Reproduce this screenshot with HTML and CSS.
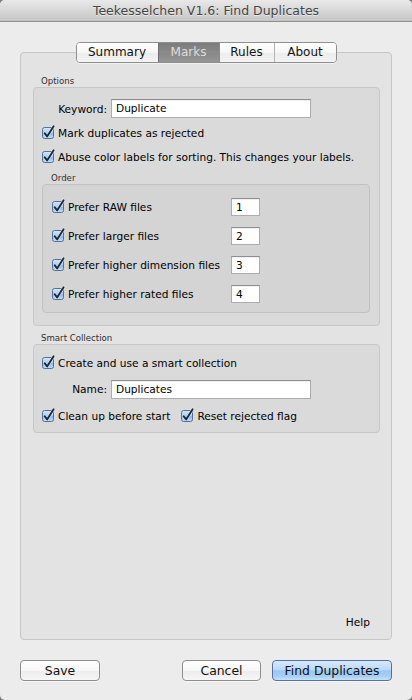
FILE: index.html
```html
<!DOCTYPE html>
<html>
<head>
<meta charset="utf-8">
<title>Teekesselchen V1.6: Find Duplicates</title>
<link rel="stylesheet" href="styles.css">
</head>
<body>
<div class="window">
  <div class="titlebar">Teekesselchen V1.6: Find Duplicates</div>
  <div class="content">
    <div class="tabs">
      <div class="tab tab-summary">Summary</div>
      <div class="tab tab-marks active">Marks</div>
      <div class="tab tab-rules">Rules</div>
      <div class="tab tab-about">About</div>
    </div>
    <div class="tabview">
      <div class="group-label">Options</div>
      <div class="group options">
        <div class="field-row">
          <span class="field-label">Keyword:</span>
          <div class="input wide">Duplicate</div>
        </div>
        <div class="check-list">
          <div class="check-row">
            <svg class="check" width="12" height="12" viewBox="0 0 12 12"><use href="#cb"/></svg>
            <span>Mark duplicates as rejected</span>
          </div>
          <div class="check-row">
            <svg class="check" width="12" height="12" viewBox="0 0 12 12"><use href="#cb"/></svg>
            <span>Abuse color labels for sorting. This changes your labels.</span>
          </div>
        </div>
        <div class="group-label sub">Order</div>
        <div class="group order">
          <div class="order-row">
            <svg class="check" width="12" height="12" viewBox="0 0 12 12"><use href="#cb"/></svg>
            <span class="order-text">Prefer RAW files</span>
            <div class="input small">1</div>
          </div>
          <div class="order-row">
            <svg class="check" width="12" height="12" viewBox="0 0 12 12"><use href="#cb"/></svg>
            <span class="order-text">Prefer larger files</span>
            <div class="input small">2</div>
          </div>
          <div class="order-row">
            <svg class="check" width="12" height="12" viewBox="0 0 12 12"><use href="#cb"/></svg>
            <span class="order-text">Prefer higher dimension files</span>
            <div class="input small">3</div>
          </div>
          <div class="order-row">
            <svg class="check" width="12" height="12" viewBox="0 0 12 12"><use href="#cb"/></svg>
            <span class="order-text">Prefer higher rated files</span>
            <div class="input small">4</div>
          </div>
        </div>
      </div>
      <div class="group-label smart-label">Smart Collection</div>
      <div class="group smart">
        <div class="check-row">
          <svg class="check" width="12" height="12" viewBox="0 0 12 12"><use href="#cb"/></svg>
          <span>Create and use a smart collection</span>
        </div>
        <div class="field-row name-row">
          <span class="field-label">Name:</span>
          <div class="input wide">Duplicates</div>
        </div>
        <div class="check-row clean-row">
          <svg class="check" width="12" height="12" viewBox="0 0 12 12"><use href="#cb"/></svg>
          <span>Clean up before start</span>
          <svg class="check second" width="12" height="12" viewBox="0 0 12 12"><use href="#cb"/></svg>
          <span>Reset rejected flag</span>
        </div>
      </div>
      <div class="help">Help</div>
    </div>
    <div class="buttons">
      <div class="btn btn-save">Save</div>
      <div class="btn btn-cancel">Cancel</div>
      <div class="btn btn-find">Find Duplicates</div>
    </div>
  </div>
</div>
<svg width="0" height="0" class="defs">
  <defs>
    <linearGradient id="cbg" x1="0" y1="0" x2="0" y2="1">
      <stop offset="0" stop-color="#d6e7fa"/>
      <stop offset="0.5" stop-color="#a9cbf0"/>
      <stop offset="0.55" stop-color="#8db9ea"/>
      <stop offset="1" stop-color="#c4def8"/>
    </linearGradient>
    <g id="cb">
      <rect x="0.5" y="0.5" width="11" height="11" rx="2" fill="url(#cbg)" stroke="#51709a"/>
      <path d="M2.6 6.2 L5.1 9.4 L11.6 -0.8" fill="none" stroke="#f2f6fb" stroke-width="3.2" stroke-linecap="round" stroke-linejoin="round" opacity="0.55"/>
      <path d="M2.6 6.2 L5.1 9.4 L11.6 -0.8" fill="none" stroke="#1d2a3d" stroke-width="1.9" stroke-linecap="round" stroke-linejoin="round"/>
    </g>
  </defs>
</svg>
</body>
</html>
```

FILE: styles.css
```css
html, body {
  margin: 0;
  padding: 0;
}

body {
  background: #7c7c7c;
  font-family: "DejaVu Sans", "Verdana", sans-serif;
  font-size: 10.6px;
  color: #000;
}

.defs {
  position: absolute;
  width: 0;
  height: 0;
}

.window {
  width: 412px;
  height: 700px;
  background: #ececec;
  border-radius: 5px;
  overflow: hidden;
  display: flex;
  flex-direction: column;
}

.titlebar {
  height: 21px;
  border-bottom: 1px solid #8e8e8e;
  background: linear-gradient(#e9e9e9, #d3d3d3 60%, #c6c6c6);
  text-align: center;
  font-size: 12.5px;
  line-height: 22px;
  color: #454545;
  text-shadow: 0 1px 0 rgba(255, 255, 255, 0.55);
}

.content {
  flex: 1;
  padding: 20px 20px 0;
  display: flex;
  flex-direction: column;
}

/* segmented tab control */
.tabs {
  align-self: center;
  display: flex;
  height: 19px;
  border: 1px solid #8f8f8f;
  border-radius: 4px;
  overflow: hidden;
  margin-bottom: -11px;
  position: relative;
  z-index: 1;
  box-shadow: 0 1px 0 rgba(255, 255, 255, 0.5);
}

.tab {
  box-sizing: border-box;
  height: 19px;
  line-height: 19px;
  text-align: center;
  font-size: 12px;
  color: #111;
  background: linear-gradient(#ffffff, #f6f6f6 50%, #ececec 51%, #f3f3f3);
  border-left: 1px solid #b3b3b3;
}

.tab-summary { width: 81px; border-left: 0; }
.tab-marks { width: 61px; }
.tab-rules { width: 55px; }
.tab-about { width: 62px; }

.tab.active {
  background: linear-gradient(#7b7b7b, #8a8a8a 50%, #888888 51%, #969696);
  color: #dedede;
  border-left-color: #6f6f6f;
}

.tab.active + .tab {
  border-left-color: #8a8a8a;
}

/* tab view box */
.tabview {
  box-sizing: border-box;
  height: 588px;
  border: 1px solid #c6c6c6;
  border-radius: 4px;
  background: #e3e3e3;
  padding: 22px 11px 0 12px;
  display: flex;
  flex-direction: column;
}

.group-label {
  font-size: 8.6px;
  line-height: 12px;
  color: #2f2f2f;
  padding-left: 8px;
}

.group-label.sub {
  padding-left: 1px;
  margin-left: 8px;
  margin-top: 3px;
}

.smart-label {
  margin-top: 6px;
}

.group {
  border: 1px solid #c7c7c7;
  border-radius: 4px;
  background: #dadada;
}

.options {
  padding: 11px 9px 12px 8px;
}

.order {
  background: #d4d4d4;
  border-color: #c1c1c1;
  padding: 7px 0 4px 9px;
}

.smart {
  padding: 6px 9px 3px 8px;
}

.field-row {
  display: flex;
  align-items: center;
  height: 19px;
}

.field-label {
  width: 65px;
  text-align: right;
  margin-right: 4px;
}

.input {
  box-sizing: border-box;
  background: #fff;
  border: 1px solid #acacac;
  border-top-color: #8e8e8e;
  box-shadow: inset 0 1px 0 rgba(0, 0, 0, 0.06);
  padding-left: 4px;
  color: #000;
}

.input.wide {
  width: 200px;
  height: 19px;
  line-height: 17px;
}

.input.small {
  width: 29px;
  height: 18px;
  line-height: 16px;
}

.check-list {
  padding-top: 3px;
}

.check-row {
  display: flex;
  align-items: center;
  height: 24px;
}

.check {
  display: block;
  flex: none;
  overflow: visible;
  margin-right: 4px;
}

.check.second {
  margin-left: 11px;
}

.name-row {
  height: 28px;
}

.clean-row {
  height: 26px;
}

.order-row {
  display: flex;
  align-items: center;
  height: 29px;
}

.order-text {
  width: 159px;
  margin-right: 4px;
}

.help {
  margin-top: auto;
  margin-bottom: 10px;
  padding-right: 10px;
  text-align: right;
  line-height: 14px;
}

/* bottom buttons */
.buttons {
  display: flex;
  margin-top: 20px;
}

.btn {
  box-sizing: border-box;
  height: 21px;
  border: 1px solid #8e8e8e;
  border-radius: 4px;
  font-size: 12.4px;
  line-height: 19px;
  text-align: center;
  color: #111;
  background: linear-gradient(#ffffff, #f7f7f7 50%, #ececec 51%, #f6f6f6);
  box-shadow: 0 1px 0 rgba(255, 255, 255, 0.6);
}

.btn-save { width: 80px; }

.btn-cancel {
  width: 79px;
  margin-left: auto;
}

.btn-find {
  width: 120px;
  margin-left: 11px;
  border-color: #5371a1;
  background: linear-gradient(#d8e9fc, #bcd9f8 45%, #9cc7f3 52%, #a6cff6 80%, #c6e2fb);
}
```
